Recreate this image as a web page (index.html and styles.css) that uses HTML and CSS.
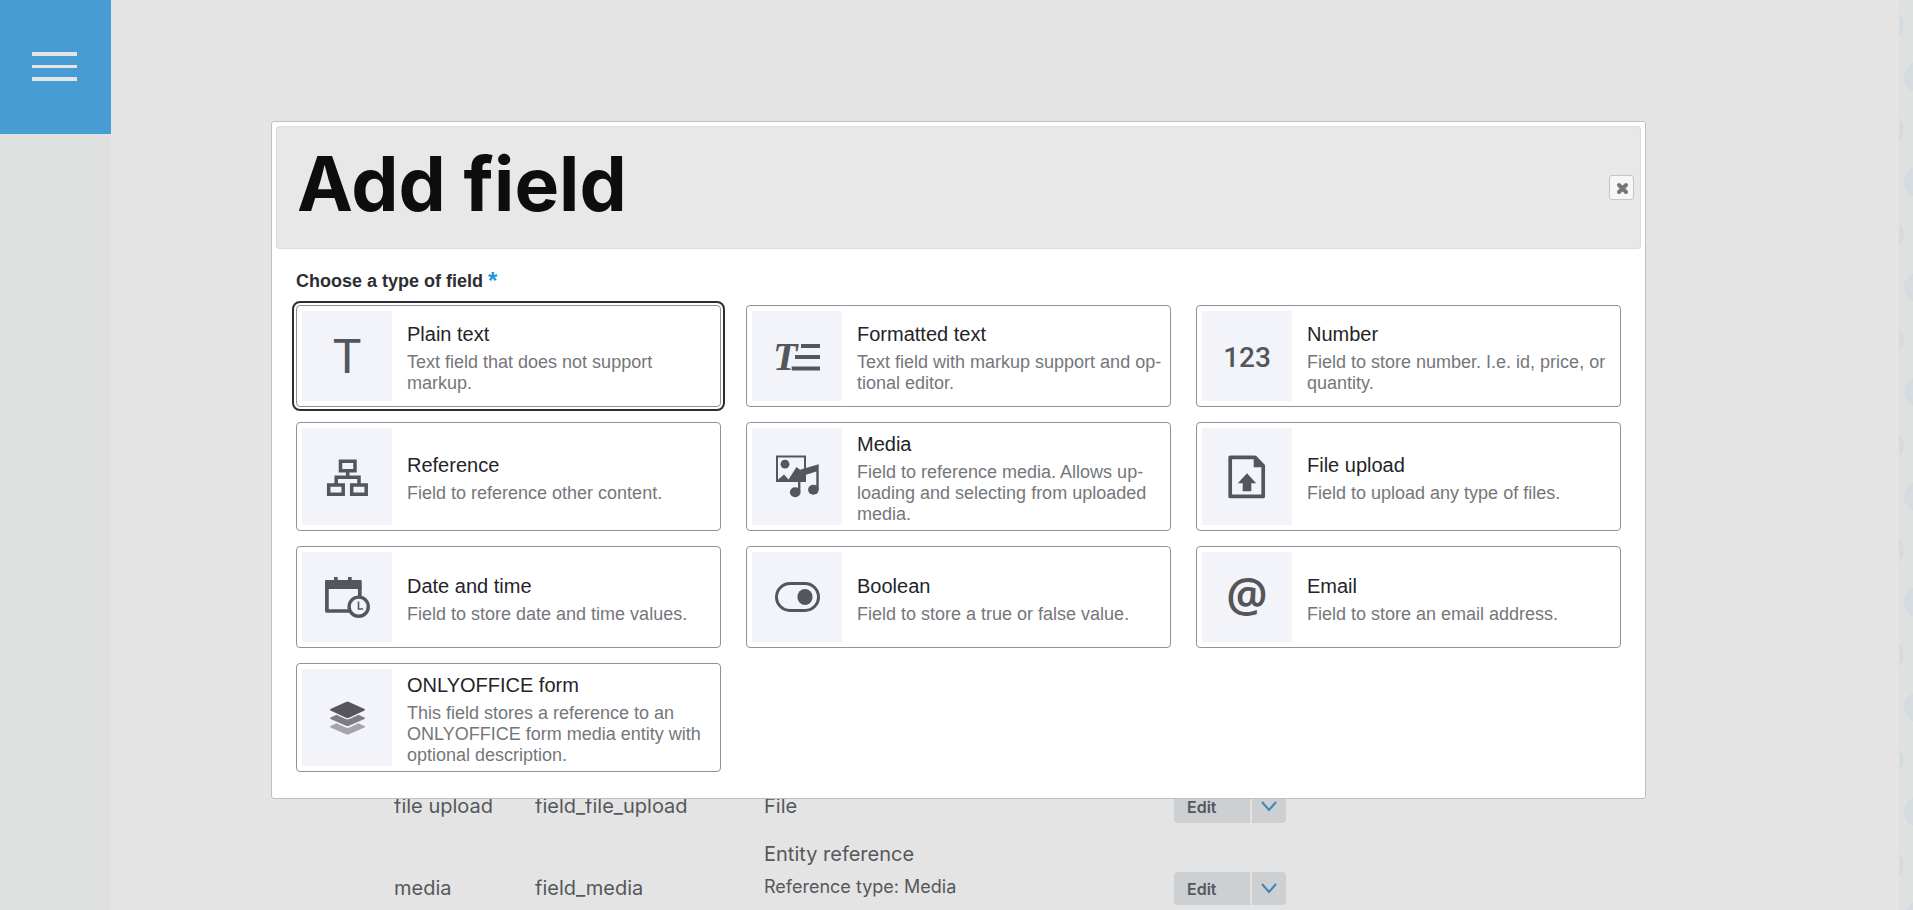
FILE: index.html
```html
<!DOCTYPE html>
<html lang="en">
<head>
<meta charset="utf-8">
<title>Add field</title>
<link rel="stylesheet" href="styles.css">
</head>
<body>
<div class="page">
  <aside class="rail">
    <button class="menu" type="button" aria-label="Menu">
      <svg width="45" height="29" viewBox="0 0 45 29" fill="#e4e4e4"><rect width="45" height="4"/><rect y="13" width="45" height="3"/><rect y="25" width="45" height="4"/></svg>
    </button>
  </aside>
  <main class="main">
    <table class="fields">
      <colgroup><col class="col-label"><col class="col-name"><col class="col-type"><col></colgroup>
      <tr>
        <td>file upload</td><td>field_file_upload</td><td>File</td>
        <td><div class="split"><button class="edit" type="button">Edit</button><button class="more" type="button" aria-label="More actions"><svg width="16" height="11" viewBox="0 0 16 11" fill="none" stroke="#3f86b3" stroke-width="2"><path d="M1 1l7 8 7-8"/></svg></button></div></td>
      </tr>
      <tr class="tall">
        <td>media</td><td>field_media</td><td>Entity reference<div class="sub">Reference type: Media</div></td>
        <td><div class="split"><button class="edit" type="button">Edit</button><button class="more" type="button" aria-label="More actions"><svg width="16" height="11" viewBox="0 0 16 11" fill="none" stroke="#3f86b3" stroke-width="2"><path d="M1 1l7 8 7-8"/></svg></button></div></td>
      </tr>
    </table>
  </main>
  <svg class="pattern" aria-hidden="true">
    <defs><pattern id="dots" width="64" height="105" patternUnits="userSpaceOnUse"><g fill="#d5dbde"><circle cx="-11" cy="25" r="16"/><circle cx="21" cy="77" r="16"/></g></pattern></defs>
    <rect width="100%" height="100%" fill="url(#dots)"/>
  </svg>
</div>

<div class="overlay">
  <section class="dialog" role="dialog" aria-labelledby="dialog-title">
    <header class="titlebar">
      <h1 class="title" id="dialog-title">Add field</h1>
      <button class="close" type="button" aria-label="Close"><svg width="13" height="13" viewBox="0 0 13 13" stroke="#777" stroke-width="4" stroke-linecap="round"><path d="M3 3l7 7M10 3l-7 7"/></svg></button>
    </header>
    <form class="content">
      <fieldset class="group">
        <legend class="legend">Choose a type of field <span class="required">*</span></legend>
        <div class="grid">
          <label class="card card-focus">
            <input class="radio" type="radio" name="type">
            <span class="thumb"><svg class="icon" viewBox="0 0 90 90"><text class="glyph-t" x="45" y="62">T</text></svg></span>
            <span class="text"><span class="name">Plain text</span><span class="desc">Text field that does not support markup.</span></span>
          </label>
          <label class="card">
            <input class="radio" type="radio" name="type">
            <span class="thumb"><svg class="icon" viewBox="0 0 90 90"><text class="glyph-serif" x="21" y="59">T</text><path d="M49 33h19v4h-19zM43 44h25v4h-25zM39.700 55.500h28.300v4h-28.300z"/></svg></span>
            <span class="text"><span class="name">Formatted text</span><span class="desc">Text field with markup support and op&shy;tional editor.</span></span>
          </label>
          <label class="card">
            <input class="radio" type="radio" name="type">
            <span class="thumb"><svg class="icon" viewBox="0 0 90 90"><text class="glyph-num" x="45" y="56">123</text></svg></span>
            <span class="text"><span class="name">Number</span><span class="desc">Field to store number. I.e. id, price, or quantity.</span></span>
          </label>
          <label class="card">
            <input class="radio" type="radio" name="type">
            <span class="thumb"><svg class="icon" viewBox="0 0 90 90"><g fill="none" stroke="#55565b" stroke-width="3.500"><path d="M38.500 29.200h14.500v9.600h-14.500zM26.700 53h14.500v9.200h-14.500zM49.700 53h14.500v9.200h-14.500zM45.700 39v6.500M34.200 52v-6.700h22.800v6.700"/></g></svg></span>
            <span class="text"><span class="name">Reference</span><span class="desc">Field to reference other content.</span></span>
          </label>
          <label class="card">
            <input class="radio" type="radio" name="type">
            <span class="thumb"><svg class="icon" viewBox="0 0 90 90"><path fill="none" stroke="#55565b" stroke-width="2" d="M25 24.500h28v24.500h-28z"/><circle cx="33" cy="32.200" r="4.400"/><path d="M25 50V48.500L32 42.500L36.500 47.500L44.500 35L48 37.800L66.700 32.200V58H64.300V39.500L54 42.800V50H48.400V60H46V50z"/><ellipse cx="43.200" cy="60.300" rx="5.300" ry="5"/><ellipse cx="61.400" cy="57.800" rx="5.300" ry="5"/></svg></span>
            <span class="text"><span class="name">Media</span><span class="desc">Field to reference media. Allows up&shy;loading and selecting from uploaded media.</span></span>
          </label>
          <label class="card">
            <input class="radio" type="radio" name="type">
            <span class="thumb"><svg class="icon" viewBox="0 0 90 90"><path fill="none" stroke="#55565b" stroke-width="3.700" stroke-linejoin="round" d="M28.200 25.300H53L61.200 33.800V64.400H28.200z"/><path d="M51.700 25V35.300H61.500V33L53.700 24zM45 41.200L54.200 51.200H49.300V59.300H40.700V51.200H35.800z"/></svg></span>
            <span class="text"><span class="name">File upload</span><span class="desc">Field to upload any type of files.</span></span>
          </label>
          <label class="card">
            <input class="radio" type="radio" name="type">
            <span class="thumb"><svg class="icon" viewBox="0 0 90 90"><path d="M32 25h3.700v4H32zM46 25h3.700v4H46zM24 28h34.700q1 0 1 1v8H23v-8q0-1 1-1z"/><path fill="none" stroke="#55565b" stroke-width="3.700" stroke-linejoin="round" d="M24.900 34V59H57.800V34"/><circle cx="56.700" cy="54.700" r="9.600" fill="#f3f4f9" stroke="#55565b" stroke-width="3.400"/><path fill="none" stroke="#55565b" stroke-width="1.600" d="M56.500 49.500v7.500h4.700"/></svg></span>
            <span class="text"><span class="name">Date and time</span><span class="desc">Field to store date and time values.</span></span>
          </label>
          <label class="card">
            <input class="radio" type="radio" name="type">
            <span class="thumb"><svg class="icon" viewBox="0 0 90 90"><rect x="24.500" y="31.500" width="42" height="27" rx="13.500" fill="none" stroke="#55565b" stroke-width="3"/><ellipse cx="53" cy="45" rx="7.600" ry="8"/></svg></span>
            <span class="text"><span class="name">Boolean</span><span class="desc">Field to store a true or false value.</span></span>
          </label>
          <label class="card">
            <input class="radio" type="radio" name="type">
            <span class="thumb"><svg class="icon" viewBox="0 0 90 90"><text class="glyph-at" x="45" y="60">@</text></svg></span>
            <span class="text"><span class="name">Email</span><span class="desc">Field to store an email address.</span></span>
          </label>
          <label class="card">
            <input class="radio" type="radio" name="type">
            <span class="thumb"><svg class="icon" viewBox="0 0 90 90"><path opacity=".5" d="M28.500 53L34.500 50.200L43 54.200Q45.500 55.300 48 54.200L56.500 50.200L62.500 53Q63.500 53.700 62.500 54.400L47 61.200Q45.500 61.800 44 61.200L28.500 54.400Q27.500 53.700 28.500 53z"/><path opacity=".75" d="M28.500 44.500L34.500 41.700L43 45.700Q45.500 46.800 48 45.700L56.500 41.700L62.500 44.500Q63.500 45.200 62.500 45.900L47 52.700Q45.500 53.300 44 52.700L28.500 45.900Q27.500 45.200 28.500 44.500z"/><path d="M28.500 36L44 28.900Q45.500 28.300 47 28.900L62.500 36Q63.500 36.800 62.500 37.500L47 44.700Q45.500 45.300 44 44.700L28.500 37.500Q27.500 36.800 28.500 36z"/></svg></span>
            <span class="text"><span class="name">ONLYOFFICE form</span><span class="desc">This field stores a reference to an ONLYOFFICE form media entity with optional description.</span></span>
          </label>
        </div>
      </fieldset>
    </form>
  </section>
</div>
</body>
</html>
```
FILE: styles.css
```css
* { box-sizing: border-box; }
body { margin: 0; background: #dfe1e0; font-family: "Liberation Sans", Arial, sans-serif; }
button { margin: 0; padding: 0; border: 0; font: inherit; cursor: pointer; }
svg { display: block; }

.page { display: flex; height: 100vh; overflow: hidden; }
.rail { width: 111px; flex: none; }
.menu { display: flex; align-items: center; justify-content: center; width: 100%; height: 134px; padding: 0 2px 2px 0; background: #479dd3; }
.main { flex: 1; min-width: 0; padding: 790px 0 0 283px; background: #e4e4e4; }
.pattern { flex: none; width: 14px; height: 100%; }

.fields { width: 100%; table-layout: fixed; border-collapse: collapse; font: 20px/34px Inter, sans-serif; color: #54585c; }
.col-label { width: 141px; }
.col-name { width: 229px; }
.col-type { width: 410px; }
.fields td { height: 33px; padding: 0 0 1px; vertical-align: bottom; line-height: 32px; }
.fields .tall td { height: 82px; }
.sub { font-size: 18px; line-height: 34px; }
.split { display: flex; gap: 2px; height: 32px; }
.edit { width: 76px; height: 33px; padding-left: 13px; text-align: left; background: #ccd0d3; border-radius: 4px 0 0 4px; font-size: 16px; font-weight: 600; color: #54585c; }
.more { display: flex; align-items: center; justify-content: center; width: 34px; height: 33px; background: #ccd0d3; border-radius: 0 4px 4px 0; }

.overlay { position: absolute; inset: 0; padding: 121px 267px 0 271px; }
.dialog { padding: 4px; background: #fff; border: 1px solid #c0c0c0; border-radius: 3px; }
.titlebar { display: flex; align-items: center; justify-content: space-between; padding: 0 6px 0 20px; background: #e8e8e8; border: 1px solid #dcdcdc; border-radius: 3px; }
.title { margin: 14px 0 21px; font: 700 75px/86px Inter, sans-serif; color: #0c0d0e; }
.close { display: flex; align-items: center; justify-content: center; width: 25px; height: 25px; padding: 2px 0 0 2px; background: #f6f6f6; border: 1px solid #c5c5c5; border-radius: 3px; }
.content { padding: 14px 20px 22px; }
.group { margin: 0; padding: 0; border: 0; min-width: 0; }
.legend { display: flex; gap: 5px; height: 42px; padding: 0; font-size: 18px; line-height: 36px; font-weight: 700; color: #2d2e33; }
.required { font-size: 24px; color: #2494db; }
.grid { display: grid; grid-template-columns: repeat(3, 1fr); gap: 15px 25px; }
.card { position: relative; display: flex; gap: 15px; padding: 5px; border: 1px solid #919297; border-radius: 4px; cursor: pointer; }
.card-focus { outline: 2px solid #2d2e33; outline-offset: 2px; }
.radio { position: absolute; width: 1px; height: 1px; margin: 0; opacity: 0; }
.thumb { display: flex; align-items: center; flex: none; width: 90px; min-height: 90px; background: #f3f4f9; }
.icon { width: 90px; height: 90px; fill: #55565b; }
.glyph-t { font: 48px Roboto, sans-serif; text-anchor: middle; }
.glyph-serif { font: italic 700 40px "Liberation Serif", serif; }
.glyph-num { font: 500 28px Roboto, sans-serif; text-anchor: middle; }
.glyph-at { font: 600 46px "Noto Sans", sans-serif; text-anchor: middle; }
.text { display: flex; flex-direction: column; justify-content: center; min-width: 0; }
.name { margin-bottom: 1px; font-size: 20px; line-height: 33px; color: #232429; }
.desc { font-size: 18px; line-height: 21px; color: #75767b; }
```
